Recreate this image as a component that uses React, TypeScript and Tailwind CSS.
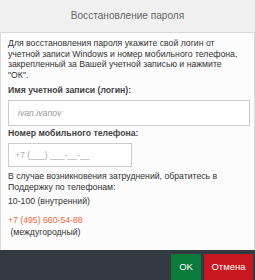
export default function App() {
  return (
    <div className="w-[255px] h-[280px] flex flex-col bg-white font-['Liberation_Sans',Arial,sans-serif] text-[#333]">
      <div className="h-[33px] shrink-0 flex items-center justify-center bg-[#f0f0f0] border-b border-[#d9d9d9] text-[10.1px] text-[#666]">
        Восстановление пароля
      </div>
      <div className="flex-1 flex flex-col px-[7px] pt-[5px] border-x border-[#dcdcdc] bg-[#fcfcfc] text-[8.7px] leading-[10.5px]">
        <p className="pr-[8px]">
          Для восстановления пароля укажите свой логин от учетной записи Windows и номер мобильного телефона,
          закрепленный за Вашей учетной записью и нажмите "ОК".
        </p>
        <label className="mt-[5px] font-bold text-[#444]">Имя учетной записи (логин):</label>
        <input
          placeholder="ivan.ivanov"
          className="mt-[4px] h-[26px] w-[242px] border border-[#ccc] bg-white px-[9px] text-[8.7px] italic outline-none placeholder:text-[#999]"
        />
        <label className="mt-[2px] font-bold text-[#444]">Номер мобильного телефона:</label>
        <input
          placeholder="+7 (___) ___-__-__"
          className="mt-[5px] h-[24px] w-[124px] border border-[#ccc] bg-white px-[6px] text-[8.7px] outline-none placeholder:text-[#aaa]"
        />
        <p className="mt-[4px]">В случае возникновения затруднений, обратитесь в Поддержку по телефонам:</p>
        <p className="mt-[4px]">10-100 (внутренний)</p>
        <p className="mt-[8px] text-[#f0643c]">+7 (495) 660-54-88</p>
        <p className="mt-[2px]">&nbsp;(междугородный)</p>
      </div>
      <div className="h-[30px] shrink-0 flex items-end justify-end gap-[2px] pr-[2px] bg-[#343a41]">
        <button className="h-[26px] w-[30px] bg-[#0b7a3a] text-white text-[9.5px]">OK</button>
        <button className="h-[26px] w-[49px] bg-[#c8171e] text-white text-[9.5px] ml-[1px]">Отмена</button>
      </div>
    </div>
  )
}
